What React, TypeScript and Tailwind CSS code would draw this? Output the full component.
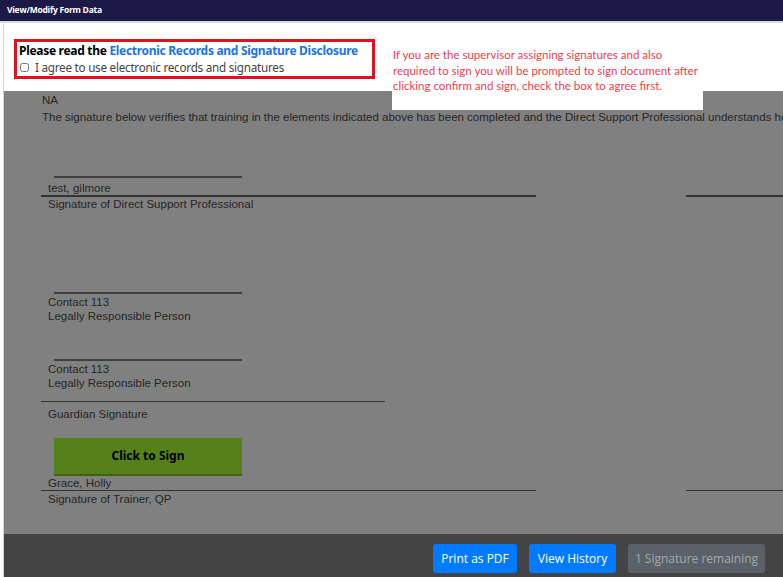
import { useState } from 'react';

const doc = "font-['Liberation_Sans',Arial,sans-serif] text-[11.5px] text-[#262626]";

function ShortLine({ className = '' }: { className?: string }) {
  return <div className={`ml-[12px] w-[188px] h-[2px] bg-[#3f3f3f] ${className}`} />;
}

function SplitLine({ className = '' }: { className?: string }) {
  return (
    <div className={`flex -ml-[1px] ${className}`}>
      <div className="w-[495px] h-[1.5px] bg-[#333]" />
      <div className="ml-[150px] flex-1 h-[1.5px] bg-[#333]" />
    </div>
  );
}

export default function App() {
  const [agreed, setAgreed] = useState(false);

  return (
    <div className="w-[783px] h-[577px] overflow-hidden bg-white flex flex-col">
      {/* title bar */}
      <div className="h-[21px] shrink-0 bg-[#1d1946] flex items-center pl-[7px]">
        <span className="font-['Open_Sans',sans-serif] font-bold text-[8.5px] text-white tracking-[-0.25px]">
          View/Modify Form Data
        </span>
      </div>
      <div className="h-[2px] shrink-0 bg-[#d9d9d9]" />

      <div className="flex-1 flex min-h-0">
        <div className="w-[4px] shrink-0 bg-white border-r border-[#d4d4d4]" />

        <div className="flex-1 flex flex-col min-w-0">
          {/* consent panel */}
          <div className="relative h-[68px] shrink-0 bg-white pt-[16px] pl-[10px]">
            <div className="w-[361px] h-[40px] border-[3px] border-[#e3111f] pl-[2px] pt-[1px] font-['Noto_Sans',sans-serif]">
              <div className="text-[12px] font-bold leading-[16px] text-black tracking-[-0.3px]">
                Please read the{' '}
                <a className="text-[#1a73e8] cursor-pointer">Electronic Records and Signature Disclosure</a>
              </div>
              <label className="flex items-center gap-[6px] text-[11.7px] leading-[17px] text-[#444] tracking-[-0.25px]">
                <input
                  type="checkbox"
                  checked={agreed}
                  onChange={e => setAgreed(e.target.checked)}
                  className="w-[9px] h-[9px] m-0 ml-[1px]"
                />
                I agree to use electronic records and signatures
              </label>
            </div>
            <div className="absolute left-[388px] top-0 w-[311px] h-[87px] bg-white pt-[24px] pl-[1px] font-['Lato',sans-serif] text-[11.5px] leading-[15.5px] text-[#ef3c4b]">
              If you are the supervisor assigning signatures and also
              <br />
              required to sign you will be prompted to sign document after
              <br />
              clicking confirm and sign, check the box to agree first.
            </div>
          </div>

          {/* document (dimmed) */}
          <div className={`flex-1 bg-[#808080] pl-[38px] whitespace-nowrap overflow-hidden ${doc}`}>
            <div className="leading-[17px] pt-[1px]">NA</div>
            <div className="leading-[17px]">
              The signature below verifies that training in the elements indicated above has been completed and the Direct Support Professional understands how to apply them.
            </div>

            <ShortLine className="mt-[50px]" />
            <div className="leading-[14px] mt-[3px] pl-[6px]">test, gilmore</div>
            <SplitLine />
            <div className="leading-[15px] pl-[6px]">Signature of Direct Support Professional</div>

            <ShortLine className="mt-[80px]" />
            <div className="leading-[14px] mt-[1px] pl-[6px]">Contact 113</div>
            <div className="leading-[14px] pl-[6px]">Legally Responsible Person</div>

            <ShortLine className="mt-[36px]" />
            <div className="leading-[14px] mt-[1px] pl-[6px]">Contact 113</div>
            <div className="leading-[14px] pl-[6px]">Legally Responsible Person</div>
            <div className="w-[344px] h-[1px] bg-[#333] -ml-[1px] mt-[11px]" />
            <div className="leading-[14px] mt-[5px] pl-[6px]">Guardian Signature</div>

            <button className="block mt-[17px] ml-[12px] w-[188px] h-[38px] bg-[#55801a] border-b-2 border-[#3f6210] font-['Noto_Sans',sans-serif] font-bold text-[12px] text-black">
              Click to Sign
            </button>
            <div className="leading-[13px] mt-[1px] pl-[6px]">Grace, Holly</div>
            <SplitLine />
            <div className="leading-[15px] mt-[1px] pl-[6px]">Signature of Trainer, QP</div>
          </div>

          {/* footer */}
          <div className="h-[43px] shrink-0 bg-[#444444] flex items-end justify-end gap-[12px] pr-[18px] pb-[4px] font-['Open_Sans',sans-serif] text-[12px]">
            <button className="h-[29px] w-[84px] rounded-[3px] bg-[#007bff] text-white">Print as PDF</button>
            <button className="h-[29px] w-[87px] rounded-[3px] bg-[#007bff] text-white">View History</button>
            <button className="h-[29px] w-[137px] rounded-[3px] bg-[#5a6169] text-[#a3a7ab]">1 Signature remaining</button>
          </div>
        </div>
      </div>
    </div>
  );
}
